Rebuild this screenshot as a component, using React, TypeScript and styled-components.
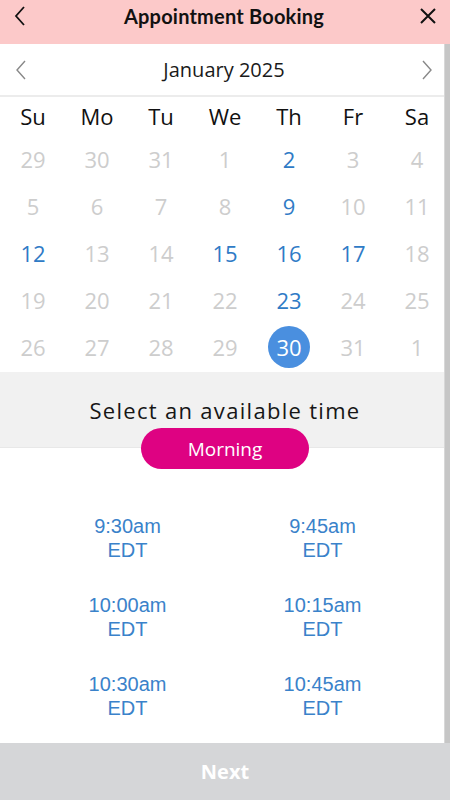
import styled, { createGlobalStyle } from "styled-components";

const GlobalStyle = createGlobalStyle`
  html, body {
    margin: 0;
    padding: 0;
    background: #ffffff;
  }
  * {
    box-sizing: border-box;
  }
`;

const Page = styled.div`
  display: flex;
  flex-direction: column;
  width: 450px;
  height: 800px;
  overflow: hidden;
  font-family: "Open Sans", sans-serif;
`;

const Header = styled.div`
  display: flex;
  align-items: center;
  justify-content: space-between;
  height: 44px;
  padding: 0 12px 12px 10px;
  background: #fcc9c9;
`;

const Title = styled.h1`
  margin: 0;
  font-family: Lato, "Open Sans", sans-serif;
  font-weight: 700;
  font-size: 20px;
  color: #111111;
  letter-spacing: 0.2px;
`;

const IconButton = styled.button`
  display: flex;
  align-items: center;
  justify-content: center;
  width: 20px;
  height: 28px;
  padding: 0;
  border: none;
  background: none;
`;

const Main = styled.div`
  position: relative;
  flex: 1;
  display: flex;
  flex-direction: column;
  background: white;

  &::after {
    content: "";
    position: absolute;
    top: 0;
    right: 0;
    bottom: 0;
    width: 5px;
    background: #c6c6c6;
    border-left: 1px solid #d8d8d8;
  }
`;

const MonthBar = styled.div`
  display: flex;
  align-items: center;
  justify-content: space-between;
  height: 53px;
  padding: 0 17px 0 15px;
  border-bottom: 2px solid #ececec;
`;

const MonthLabel = styled.span`
  font-size: 20px;
  color: #1a1a1a;
`;

const Grid = styled.div`
  display: grid;
  grid-template-columns: repeat(7, 64px);
  padding: 0 0 2px 1px;
`;

const DayName = styled.div`
  height: 38px;
  display: flex;
  align-items: center;
  justify-content: center;
  font-size: 22px;
  color: #111111;
`;

const DateCell = styled.div`
  height: 47px;
  display: flex;
  align-items: center;
  justify-content: center;
`;

const DateNum = styled.span<{ $state: "off" | "open" | "picked" }>`
  display: flex;
  align-items: center;
  justify-content: center;
  width: 42px;
  height: 42px;
  border-radius: 50%;
  font-size: 22px;
  color: ${(p) =>
    p.$state === "picked" ? "#ffffff" : p.$state === "open" ? "#2f7bc6" : "#cdcdcd"};
  background: ${(p) => (p.$state === "picked" ? "#4a8fdf" : "transparent")};
`;

const TimeHead = styled.div`
  display: flex;
  flex-direction: column;
  align-items: center;
  height: 76px;
  padding-top: 24px;
  background: #f1f1f1;
  border-bottom: 1px solid #e8e8e8;
`;

const TimeTitle = styled.div`
  font-size: 22px;
  line-height: 28px;
  letter-spacing: 1.3px;
  color: #161616;
`;

const Pill = styled.div`
  position: relative;
  z-index: 1;
  flex-shrink: 0;
  display: flex;
  align-items: center;
  justify-content: center;
  width: 168px;
  height: 41px;
  margin-top: 4px;
  border-radius: 21px;
  background: #de0282;
  color: #ffffff;
  font-size: 19px;
`;

const Slots = styled.div`
  display: grid;
  grid-template-columns: repeat(2, 195px);
  row-gap: 31px;
  margin: 66px 0 0 30px;
`;

const Slot = styled.div`
  display: flex;
  flex-direction: column;
  align-items: center;
  font-family: "Liberation Sans", Arial, sans-serif;
  font-size: 20px;
  line-height: 24px;
  color: #3a82ca;
`;

const Footer = styled.div`
  display: flex;
  align-items: center;
  justify-content: center;
  height: 57px;
  background: #d5d6d8;
  color: #ffffff;
  font-size: 20px;
  font-weight: 700;
`;

const days = ["Su", "Mo", "Tu", "We", "Th", "Fr", "Sa"];
const dates = [
  29, 30, 31, 1, 2, 3, 4, 5, 6, 7, 8, 9, 10, 11, 12, 13, 14, 15, 16, 17, 18, 19,
  20, 21, 22, 23, 24, 25, 26, 27, 28, 29, 30, 31, 1,
];
const openIdx = [4, 11, 14, 17, 18, 19, 25];
const pickedIdx = 32;
const times = ["9:30am", "9:45am", "10:00am", "10:15am", "10:30am", "10:45am"];

const Chevron = ({ dir, color, w }: { dir: "l" | "r"; color: string; w: number }) => (
  <svg width="12" height="20" viewBox="0 0 12 20">
    <path
      d={dir === "l" ? "M10 1 L2 10 L10 19" : "M2 1 L10 10 L2 19"}
      fill="none"
      stroke={color}
      strokeWidth={w}
    />
  </svg>
);

export default function App() {
  return (
    <Page>
      <GlobalStyle />
      <Header>
        <IconButton>
          <Chevron dir="l" color="#111" w={1.8} />
        </IconButton>
        <Title>Appointment Booking</Title>
        <IconButton>
          <svg width="18" height="18" viewBox="0 0 18 18">
            <path d="M2 2 L16 16 M16 2 L2 16" stroke="#111" strokeWidth="2" />
          </svg>
        </IconButton>
      </Header>
      <Main>
        <MonthBar>
          <Chevron dir="l" color="#888" w={1.4} />
          <MonthLabel>January 2025</MonthLabel>
          <Chevron dir="r" color="#888" w={1.4} />
        </MonthBar>
        <Grid>
          {days.map((d) => (
            <DayName key={d}>{d}</DayName>
          ))}
          {dates.map((n, i) => (
            <DateCell key={i}>
              <DateNum
                $state={i === pickedIdx ? "picked" : openIdx.includes(i) ? "open" : "off"}
              >
                {n}
              </DateNum>
            </DateCell>
          ))}
        </Grid>
        <TimeHead>
          <TimeTitle>Select an available time</TimeTitle>
          <Pill>Morning</Pill>
        </TimeHead>
        <Slots>
          {times.map((t) => (
            <Slot key={t}>
              <span>{t}</span>
              <span>EDT</span>
            </Slot>
          ))}
        </Slots>
      </Main>
      <Footer>Next</Footer>
    </Page>
  );
}
